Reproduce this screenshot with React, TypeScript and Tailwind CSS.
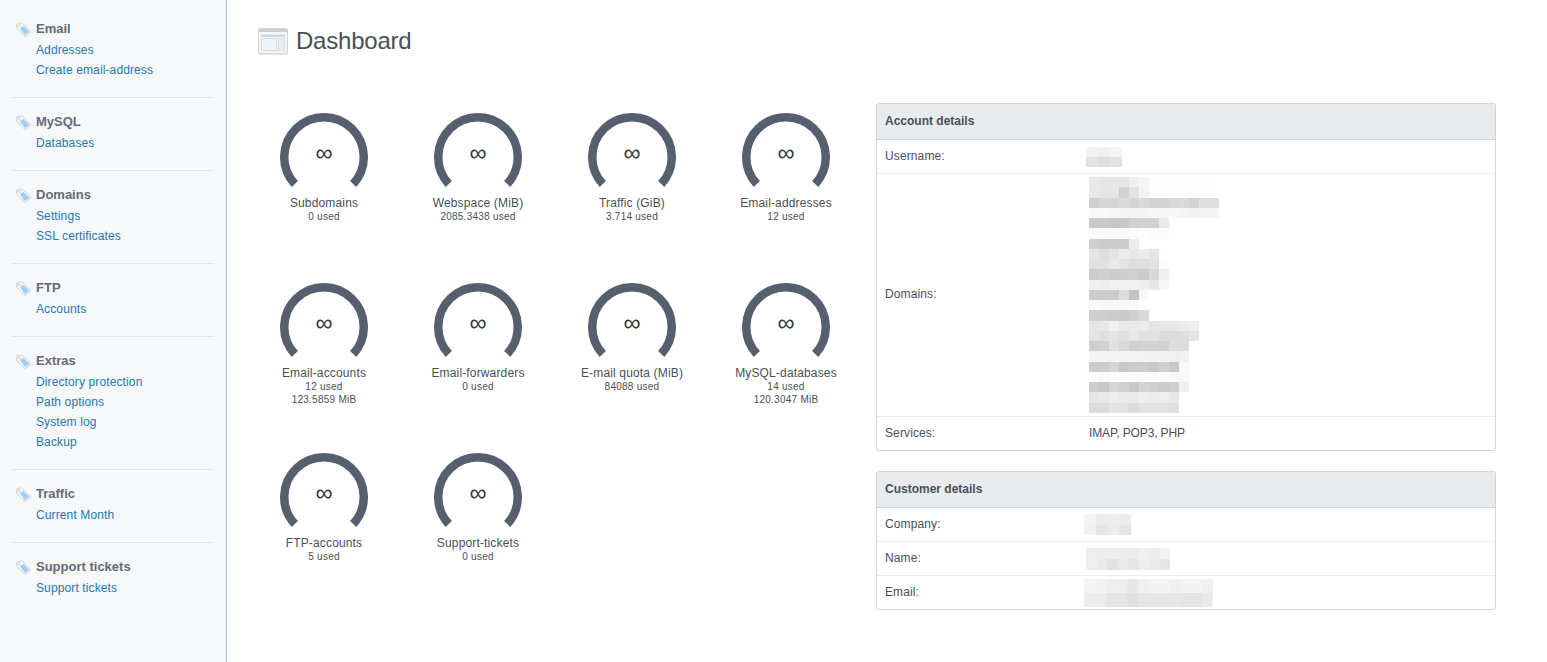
const sections = [
  { title: "Email", links: ["Addresses", "Create email-address"] },
  { title: "MySQL", links: ["Databases"] },
  { title: "Domains", links: ["Settings", "SSL certificates"] },
  { title: "FTP", links: ["Accounts"] },
  { title: "Extras", links: ["Directory protection", "Path options", "System log", "Backup"] },
  { title: "Traffic", links: ["Current Month"] },
  { title: "Support tickets", links: ["Support tickets"] },
];

const gauges = [
  { name: "Subdomains", lines: ["0 used"] },
  { name: "Webspace (MiB)", lines: ["2085.3438 used"] },
  { name: "Traffic (GiB)", lines: ["3.714 used"] },
  { name: "Email-addresses", lines: ["12 used"] },
  { name: "Email-accounts", lines: ["12 used", "123.5859 MiB"] },
  { name: "Email-forwarders", lines: ["0 used"] },
  { name: "E-mail quota (MiB)", lines: ["84088 used"] },
  { name: "MySQL-databases", lines: ["14 used", "120.3047 MiB"] },
  { name: "FTP-accounts", lines: ["5 used"] },
  { name: "Support-tickets", lines: ["0 used"] },
];

function TagIcon() {
  return (
    <svg width="16" height="16" viewBox="0 0 16 16" className="mt-[2px] shrink-0">
      <path d="M0.7 2 L5.7 0.7 L15 9.7 L9 14.7 L0.7 6.3 Z" fill="#f6f6f6" stroke="#cfd0d1" strokeWidth="1" strokeLinejoin="round" />
      <path d="M4 6.3 L7.3 4 L13.3 9.7 L9 13 Z" fill="#9bcff5" />
      <circle cx="3.3" cy="3.7" r="1" fill="#ffffff" stroke="#c2c3c5" strokeWidth="0.7" />
    </svg>
  );
}

function WindowIcon() {
  return (
    <svg width="30" height="27" viewBox="0 0 30 27" className="shrink-0">
      <rect x="0.5" y="0.5" width="29" height="25" rx="1.5" fill="#f4f4f4" stroke="#d4d4d4" />
      <rect x="1" y="1" width="28" height="3" fill="#cfcfcf" />
      <rect x="0.5" y="25.5" width="29" height="1.5" fill="#e2e2e2" />
      <rect x="3" y="6.5" width="24" height="2.5" fill="#c5dbea" />
      <rect x="3.5" y="10.5" width="15" height="12" fill="#eef4f8" stroke="#d3dfe7" />
      <rect x="20.5" y="10.5" width="6" height="12" fill="#ececec" stroke="#dfdfdf" />
    </svg>
  );
}

function Gauge({ name, lines }: { name: string; lines: string[] }) {
  return (
    <div className="flex h-[170px] w-[154px] flex-col items-center pt-[10px]">
      <div className="relative h-[76px] w-[88px]">
        <svg width="88" height="76" viewBox="0 0 88 76">
          <path d="M14.8 71 A39.75 39.75 0 1 1 73.2 71" fill="none" stroke="#555f6e" strokeWidth="8.5" />
        </svg>
        <span className="absolute left-0 right-0 top-[26px] text-center text-[24px] leading-[28px] text-[#343a40]">∞</span>
      </div>
      <div className="mt-[7px] whitespace-nowrap text-[12px] leading-[14px] tracking-[0.15px] text-[#495057]">{name}</div>
      {lines.map((l) => (
        <div key={l} className="whitespace-nowrap text-[10px] leading-[13px] tracking-[0.25px] text-[#495057]">{l}</div>
      ))}
    </div>
  );
}

function Mosaic({ rows, cell, height, className }: { rows: string[][]; cell: number; height: number; className?: string }) {
  return (
    <div className={"flex flex-col " + (className ?? "")}>
      {rows.map((r, i) => (
        <div key={i} className="flex" style={{ height }}>
          {r.map((c, j) => (
            <div key={j} style={{ width: cell, height, backgroundColor: "#" + c }} />
          ))}
        </div>
      ))}
    </div>
  );
}

const g = (s: string) => s.split(" ").map((x) => x.length === 2 ? x + x + x : x);

const domainRows = [
  "e8 e6 e6 e6 f0 f5 fd fd fe fe fe fe fe",
  "e8 e6 e6 d2 e2 f3 fd fd fe fe fe fe fe",
  "cf d6 d6 da d5 da d2 d2 d8 da d2 de de",
  "f9 f9 f6 f5 f5 f5 f7 f7 f7 f5 f3 f5 f5",
  "c9 c9 c6 c8 d0 d2 d2 e9 ff",
  "fb fb fb fa fa ff fb fb ff",
  "cf cc cc cc ee ff",
  "e4 de e4 ec e8 ec e4 fe",
  "e1 e1 e8 e3 de de e2 fc",
  "cc d0 cc ce d0 cc d8 ee",
  "f0 ee f2 f2 f0 ee e8 f6",
  "cc cc cc dc c4 fa",
  "fa f8 f8 f8 f8 fe",
  "cf ce cc ca d0 da ff",
  "e6 e8 f1 ea ea ec e4 e8 e8 ec ee",
  "e4 e0 e4 e0 e8 e0 e2 dc dc de e4",
  "ce d0 e0 d8 d0 d2 d2 d0 dc dc",
  "f4 f4 f4 f4 f4 f3 f3 f3 f0 f2",
  "cc cc d6 c8 cc cc c8 d0 c8 fa",
  "fe fa fc fc fb fb fb fb f8 f8",
  "cc c8 d6 d0 c8 d4 d0 cc d0 f0",
  "e6 ea ee ea ea ee ec ee e8",
  "dc dc e4 e2 dc e2 e2 e2 e0",
].map(g);

function Row({ label, children, h, last }: { label: string; children: React.ReactNode; h: string; last?: boolean }) {
  return (
    <div className={"flex items-center pl-[8px] " + h + (last ? "" : " border-b border-[#eceef0]")}>
      <div className="-mt-[2px] w-[204px] shrink-0 tracking-[0.12px] text-[#495057]">{label}</div>
      {children}
    </div>
  );
}

function Panel({ title, children }: { title: string; children: React.ReactNode }) {
  return (
    <div className="overflow-hidden rounded-[3px] border border-[#ced4da]">
      <div className="flex h-[36px] items-center border-b border-[#ced4da] bg-[#e9ecef] pb-[2px] pl-[8px] font-bold text-[#495057]">{title}</div>
      {children}
    </div>
  );
}

export default function App() {
  return (
    <div className="flex h-[662px] w-[1547px] overflow-hidden bg-white font-['Liberation_Sans',Arial,sans-serif] text-[12px] [text-rendering:optimizeSpeed]">
      <aside className="h-full w-[227px] shrink-0 border-r border-[#adbccc] bg-[#f7f8fa] pt-[19px]">
        {sections.map((s, i) => (
          <div key={s.title} className={i === sections.length - 1 ? "mx-[12px]" : "mx-[12px] mb-[14px] border-b border-[#e2e5e8] pb-[17px]"}>
            <div className="flex h-[20px] items-center">
              <span className="ml-[4px] mr-[4px] w-[16px]"><TagIcon /></span>
              <span className="text-[13px] font-bold text-[#646b76]">{s.title}</span>
            </div>
            <div className="mt-[1px] pl-[24px]">
              {s.links.map((l) => (
                <div key={l} className="h-[20px] leading-[20px] tracking-[0.12px] text-[#2279ae]">{l}</div>
              ))}
            </div>
          </div>
        ))}
      </aside>
      <main className="min-w-0 flex-1 pl-[20px]">
        <div className="flex h-[103px] items-start">
          <div className="ml-[11px] mt-[28px] flex items-start">
            <WindowIcon />
            <h1 className="ml-[8px] text-[24px] leading-[26px] tracking-[-0.22px] text-[#495057]">Dashboard</h1>
          </div>
        </div>
        <div className="flex items-start">
          <div className="grid w-[629px] shrink-0 grid-cols-[repeat(4,154px)] content-start">
            {gauges.map((x) => <Gauge key={x.name} name={x.name} lines={x.lines} />)}
          </div>
          <div className="w-[620px] flex-none">
            <Panel title="Account details">
              <Row label="Username:" h="h-[34px]">
                <Mosaic className="-ml-[3px]" cell={12} height={10} rows={[g("f2 f0 f4"), g("e2 de e2")]} />
              </Row>
              <Row label="Domains:" h="h-[243px]">
                <Mosaic cell={10} height={10.26} rows={domainRows} />
              </Row>
              <Row label="Services:" h="h-[33px]" last>
                <span className="-mt-[2px] tracking-[-0.13px] text-[#495057]">IMAP, POP3, PHP</span>
              </Row>
            </Panel>
            <div className="mt-[20px]">
              <Panel title="Customer details">
                <Row label="Company:" h="h-[34px]">
                  <Mosaic className="-ml-[5px]" cell={11.75} height={10.5} rows={[g("f4 ec ee ec"), g("f2 e6 ec e6")]} />
                </Row>
                <Row label="Name:" h="h-[34px]">
                  <Mosaic className="-ml-[3px]" cell={10.5} height={11} rows={[g("ee ec ee ee ec f0 ee f2"), g("ee ea e2 ea e6 ee ea e6")]} />
                </Row>
                <Row label="Email:" h="h-[33px]" last>
                  <Mosaic className="-ml-[5px]" cell={10.75} height={14} rows={[g("f4 f2 ee ee e8 f0 f3 f3 f0 f3 f3 f0"), g("ec ec e4 e4 e0 e6 e6 e6 e6 e4 e4 ea")]} />
                </Row>
              </Panel>
            </div>
          </div>
        </div>
      </main>
    </div>
  );
}
